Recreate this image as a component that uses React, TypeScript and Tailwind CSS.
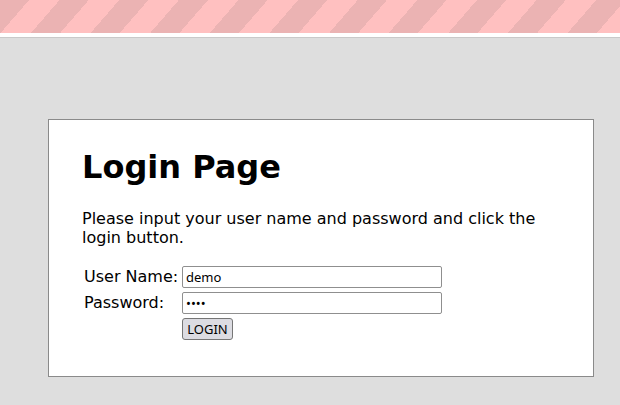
export default function App() {
  return (
    <div className="min-h-[405px] bg-[#dedede] font-['DejaVu_Sans',sans-serif] text-black">
      <StripeBar />
      <main className="pt-[81px]">
        <LoginCard />
      </main>
    </div>
  )
}

function StripeBar() {
  return (
    <header className="bg-white">
      <div className="h-[33px] bg-[repeating-linear-gradient(131deg,#ebb3b3_0px,#ebb3b3_22px,#ffc0c0_22px,#ffc0c0_45px)]" />
      <div className="h-[4px] border-b border-[#c9c9c9] box-content" />
    </header>
  )
}

function LoginCard() {
  return (
    <section className="ml-[48px] w-[546px] border border-[#8a8a8a] bg-white pl-[33px] pr-[33px] pt-[29px] pb-[36px]">
      <h1 className="text-[32px] font-bold leading-[37px]">Login Page</h1>
      <p className="mt-[23px] text-[16px] leading-[19px]">
        Please input your user name and password and click the login button.
      </p>
      <form
        className="mt-[19px] grid grid-cols-[98px_260px] gap-y-[4px] pl-[2px] text-[16px]"
        onSubmit={(e) => e.preventDefault()}
      >
        <label htmlFor="user" className="flex h-[22px] items-center">
          User Name:
        </label>
        <input
          id="user"
          type="text"
          defaultValue="demo"
          className="h-[22px] w-[260px] rounded-[2px] border border-[#8f8f8f] bg-white px-[3px] font-['Noto_Sans',sans-serif] text-[13px] outline-none"
        />
        <label htmlFor="pass" className="flex h-[22px] items-center">
          Password:
        </label>
        <input
          id="pass"
          type="password"
          defaultValue="demo"
          className="h-[22px] w-[260px] rounded-[2px] border border-[#8f8f8f] bg-white px-[3px] font-['Noto_Sans',sans-serif] text-[13px] outline-none"
        />
        <div />
        <div className="flex">
          <button
            type="submit"
            className="h-[22px] w-[51px] rounded-[3px] border border-[#767676] bg-[#dcdce2] font-['Noto_Sans',sans-serif] text-[13px] leading-none"
          >
            LOGIN
          </button>
        </div>
      </form>
    </section>
  )
}
